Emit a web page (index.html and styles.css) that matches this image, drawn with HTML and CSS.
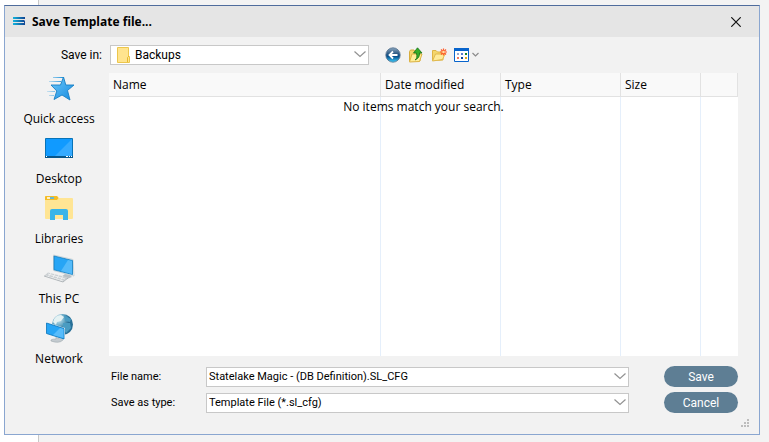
FILE: index.html
```html
<!DOCTYPE html>
<html lang="en">
<head>
<meta charset="utf-8">
<title>Save Template file...</title>
<link rel="stylesheet" href="styles.css">
</head>
<body>
<div class="desktop">
<form class="dialog" role="dialog" aria-labelledby="dialog-title">
  <header class="titlebar">
    <svg class="app-icon" width="13" height="9" viewBox="0 0 13 9" aria-hidden="true">
      <defs><linearGradient id="bar" gradientUnits="userSpaceOnUse" x1="0" x2="13" y1="0" y2="0"><stop offset="0" stop-color="#12b4dc"/><stop offset="1" stop-color="#123a8c"/></linearGradient></defs>
      <path d="M0 0H12V2H0ZM0 3H11L12 4V8H0V6H11V5H0Z" fill="url(#bar)"/>
    </svg>
    <h1 class="title" id="dialog-title">Save Template file...</h1>
    <button class="close" type="button" aria-label="Close">
      <svg width="10" height="10" viewBox="0 0 10 10"><path d="M.3.300 9.700 9.700M9.700.300.300 9.700" stroke="#111" stroke-width="1.200"/></svg>
    </button>
  </header>

  <div class="content">
    <label class="save-in-label" for="save-in">Save in:</label>
    <div class="toolbar">
      <div class="combo combo-folder">
        <select id="save-in"><option>Backups</option></select>
        <svg class="folder" width="13" height="16" viewBox="0 0 13 16" aria-hidden="true"><path d="M.5.500H11.500V9.500H12.500V15.500H.5Z" fill="#ffe48e" stroke="#ecc64c"/><path d="M10.500 15V10.500L12 9" fill="none" stroke="#e6b92e"/></svg>
        <svg class="chevron" width="12" height="7" viewBox="0 0 12 7" aria-hidden="true"><path d="M.5.500 6 5.500 11.500.500"/></svg>
      </div>
      <div class="tools">
        <button class="tool" type="button" aria-label="Back">
          <svg width="16" height="16" viewBox="0 0 16 16">
            <defs><linearGradient id="ball" x2="0" y2="1"><stop stop-color="#8ca7c0"/><stop offset=".4" stop-color="#315d86"/><stop offset=".6" stop-color="#07508c"/><stop offset="1" stop-color="#3fd0ff"/></linearGradient></defs>
            <circle cx="8" cy="8" r="7.200" fill="url(#ball)" stroke="#53708d" stroke-width=".8"/>
            <path d="M12.500 8H5M8 4.500 4.500 8 8 11.500" fill="none" stroke="#fff" stroke-width="1.800"/>
          </svg>
        </button>
        <button class="tool" type="button" aria-label="Up one level">
          <svg width="16" height="16" viewBox="0 0 16 16">
            <path d="M1.500 14V4.500L2.500 3H6L7 4.500H12V14Z" fill="#f3d56a" stroke="#d7ac3c"/>
            <path d="M1.500 15 4 7H14L11.500 14.500Z" fill="#ffed99" stroke="#dcb345"/>
            <path d="M7 13Q10 11 8.300 6H5.500L9.500.800 14 6H11.500Q12 11 7 13Z" fill="#36ad28" stroke="#167218" stroke-width=".8"/>
          </svg>
        </button>
        <button class="tool" type="button" aria-label="Create new folder">
          <svg width="16" height="16" viewBox="0 0 16 16">
            <path d="M1.500 13.500V3.500H5L6.500 5H12V13Z" fill="#f4d66d" stroke="#dfb446"/>
            <path d="M1.500 14 4.500 7H14L11.500 12.500Z" fill="#ffeb9b" stroke="#e0b94e"/>
            <path d="M12.500 1.500V8.500M9 5H16M10 2.500 15 7.500M15 2.500 10 7.500" stroke="#ff5a28" stroke-width="1.200"/><circle cx="12.500" cy="5" r="1.300" fill="#ffe0a0"/>
          </svg>
        </button>
        <button class="tool tool-view" type="button" aria-label="View menu">
          <svg width="25" height="16" viewBox="0 0 25 16">
            <path d="M.5 1.500H14.500V14.500H.5Z" fill="#fff" stroke="#0864cc"/><path d="M0 1H15V4H0Z" fill="#0864cc"/>
            <path d="M3 6h2v2H3z" fill="#98a8d0"/><path d="M7 6h2v2H7z" fill="#5b7ed1"/><path d="M11 6h2v2h-2z" fill="#148329"/>
            <path d="M3 10h2v2H3z" fill="#f07860"/><path d="M7 10h2v2H7z" fill="#08459e"/><path d="M11 10h2v2h-2z" fill="#e2ac18"/>
            <path d="M18.500 6 21.500 9 24.500 6" fill="none" stroke="#8b8b8b" stroke-width="1.200"/>
          </svg>
        </button>
      </div>
    </div>

    <nav class="places" aria-label="Places">
      <button class="place" type="button">
        <svg width="32" height="32" viewBox="0 0 32 32" aria-hidden="true">
          <defs>
            <linearGradient id="star" x2="1" y2="1"><stop stop-color="#6cc8fa"/><stop offset="1" stop-color="#168be0"/></linearGradient>
            <linearGradient id="trail" gradientUnits="userSpaceOnUse" x1="2" x2="19" y1="0" y2="0"><stop stop-color="#65b7e7" stop-opacity=".2"/><stop offset="1" stop-color="#2a98dc"/></linearGradient>
          </defs>
          <path d="M10 4.500H20M6 8.500H18M4 18.500H12M6 22.500H11" stroke="url(#trail)"/>
          <path d="M20.500 4 22.800 12H31L24.500 17.500 27 27 19 22 11 26.500 13.800 18 8 12H17.500Z" fill="url(#star)" stroke="#167fc4" stroke-width=".9"/>
        </svg>
        <span>Quick access</span>
      </button>
      <button class="place" type="button">
        <svg width="32" height="32" viewBox="0 0 32 32" aria-hidden="true">
          <path d="M2.500 5.500H29.500V24.500H2.500Z" fill="#109aff" stroke="#0873b7"/><path d="M12 23 29 6V23Z" fill="#35aaff"/>
          <path d="M2 23H30V25H2Z" fill="#07568b"/><path d="M3 23.500H4M23 23.500H25M26 23.500H27M28 23.500H29" stroke="#fff"/>
        </svg>
        <span>Desktop</span>
      </button>
      <button class="place" type="button">
        <svg width="32" height="32" viewBox="0 0 32 32" aria-hidden="true">
          <path d="M2 4Q2 3 3 3H14L16 5H29Q30 5 30 6V25Q30 26 29 26H3Q2 26 2 25Z" fill="#ffe594"/><path d="M2 7V4Q2 3 3 3H14L15.500 5 14 7Z" fill="#f4bd27"/>
          <path d="M4 5H11" stroke="#fff" stroke-width="1.500"/><path d="M7 5H11" stroke="#30a8df" stroke-width="1.500"/>
          <path d="M7 27V18Q7 16 9 16H23Q25 16 25 18V27H20V22H12V27Z" fill="#38b4e9"/>
        </svg>
        <span>Libraries</span>
      </button>
      <button class="place" type="button">
        <svg width="32" height="32" viewBox="0 0 32 32" aria-hidden="true">
          <path d="M22 21 27 22 29 24 24 26 18 24Z" fill="#b9c1c6"/><path d="M10.500 2 30 6.500 31 23 10.500 17.500Z" fill="#f7fafb" stroke="#b2bec5" stroke-width=".6"/>
          <path d="M11 3 29.500 7.500V21.500L11 16.800Z" fill="#27a5f5" stroke="#127cbc" stroke-width=".8"/><path d="M18 18 25 7 29 8V21Z" fill="#55bbfa"/>
          <path d="M5 19.500 25 24.500 20 29 1 23Z" fill="#cbd0d3"/><path d="M5 21 22 26M3 23 20 28M8 20 5 24M12 21 9 26M16 22 13 27M20 23 17 28" stroke="#f8f8f8" stroke-width=".7"/><path d="M1 23 20 29 25 25" fill="none" stroke="#9ea5a9" stroke-width=".7"/>
        </svg>
        <span>This PC</span>
      </button>
      <button class="place" type="button">
        <svg width="32" height="32" viewBox="0 0 32 32" aria-hidden="true">
          <defs><radialGradient id="globe" cx=".3" cy=".25"><stop stop-color="#d7edf4"/><stop offset=".6" stop-color="#6babc7"/><stop offset="1" stop-color="#286f96"/></radialGradient></defs>
          <circle cx="19.500" cy="11.500" r="10.500" fill="url(#globe)"/>
          <path d="M10 9Q12 2 18 2L21 4 18 8 14 9 13 12Z" fill="#e5f2f3"/><path d="M21 2 28 6 27 9 22 8ZM20 10 27 10 28 15 23 20 20 16Z" fill="#4a9cc2"/>
          <path d="M13 24 16 25.500 19 25 20 27Q16 31 8 28Q7 26 13 26Z" fill="#c4cbd0" stroke="#919ca3" stroke-width=".5"/>
          <path d="M3 9 22 15V27L3 21Z" fill="#eef6fa"/><path d="M3.500 10 21 15.500V26L3.500 20.500Z" fill="#27a5f5" stroke="#0872b8" stroke-width=".8"/><path d="M10 22 17 15 20.500 16V25Z" fill="#57bcfb"/>
        </svg>
        <span>Network</span>
      </button>
    </nav>

    <div class="list">
      <table class="files">
        <colgroup><col class="col-name"><col class="col-date"><col class="col-type"><col class="col-size"><col class="col-rest"></colgroup>
        <thead><tr><th scope="col">Name</th><th scope="col">Date modified</th><th scope="col">Type</th><th scope="col">Size</th><td></td></tr></thead>
        <tbody><tr><td></td><td></td><td></td><td></td><td></td></tr></tbody>
      </table>
      <p class="empty">No items match your search.</p>
    </div>

    <div class="fields">
      <label for="file-name">File name:</label>
      <div class="combo">
        <input id="file-name" type="text" value="Statelake Magic - (DB Definition).SL_CFG">
        <svg class="chevron" width="12" height="7" viewBox="0 0 12 7" aria-hidden="true"><path d="M.5.500 6 5.500 11.500.500"/></svg>
      </div>
      <button class="action" type="submit">Save</button>
      <label for="file-type">Save as type:</label>
      <div class="combo">
        <select id="file-type"><option>Template File (*.sl_cfg)</option></select>
        <svg class="chevron" width="12" height="7" viewBox="0 0 12 7" aria-hidden="true"><path d="M.5.500 6 5.500 11.500.500"/></svg>
      </div>
      <button class="action" type="button">Cancel</button>
    </div>
  </div>
  <svg class="grip" width="8" height="8" viewBox="0 0 8 8" aria-hidden="true"><path d="M6 0h2v2H6zM3 3h2v2H3zM6 3h2v2H6zM0 6h2v2H0zM3 6h2v2H3zM6 6h2v2H6z" fill="#bdbdbd"/></svg>
</form>
</div>
</body>
</html>
```
FILE: styles.css
```css
* { box-sizing: border-box; }

body {
  margin: 0;
  color: #000;
  font: 12px/18px "Open Sans", "Noto Sans", sans-serif;
}

button, input, select { font: inherit; color: inherit; }

button { padding: 0; border: 0; background: none; }

svg { display: block; }

.desktop {
  display: flex;
  min-height: 100vh;
  padding: 5px 9px 7px 4px;
  background: linear-gradient(to right, #fff 38px, #c8c8c8 38px, #c8c8c8 39px, #f3f3f3 39px);
}

.dialog {
  position: relative;
  display: flex;
  flex: 1;
  flex-direction: column;
  border: 1px solid #8aa6d0;
  border-top-color: #4f6c9c;
  background: #f2f2f2;
}

.titlebar {
  display: flex;
  align-items: center;
  height: 31px;
  padding: 0 18px 0 8px;
  background: #e5e5e5;
}

.title {
  flex: 1;
  margin: 0 0 0 6px;
  font: bold 12px/18px "Open Sans", sans-serif;
}

.content {
  display: grid;
  flex: 1;
  grid-template-columns: 104px 1fr;
  grid-template-rows: 36px 1fr auto;
  padding-right: 21px;
}

.save-in-label {
  align-self: center;
  padding-right: 7px;
  font-family: Roboto, sans-serif;
  text-align: right;
}

.toolbar {
  display: flex;
  align-items: center;
  padding-left: 1px;
  font-family: Roboto, sans-serif;
}

.combo { position: relative; height: 20px; }

.combo input,
.combo select {
  display: block;
  width: 100%;
  height: 100%;
  margin: 0;
  padding: 0 20px 0 2px;
  border: 1px solid #c8c8c8;
  border-radius: 0;
  outline: 0;
  background: #fff;
  appearance: none;
}

.combo-folder { flex: 0 1 259px; }

.combo-folder select { padding-left: 24px; }

.folder { position: absolute; top: 2px; left: 7px; }

.chevron { position: absolute; top: 6px; right: 3px; }

.chevron path { fill: none; stroke: #929292; stroke-width: 1.2; }

.tools { display: flex; gap: 7px; margin-left: 16px; }

.places {
  display: flex;
  grid-row: 2 / 4;
  grid-column: 1;
  flex-direction: column;
  padding-left: 4px;
}

.place {
  display: flex;
  flex-direction: column;
  align-items: center;
  gap: 5px;
  height: 60px;
}

.list {
  position: relative;
  display: grid;
  background: #fff;
}

.files {
  width: 100%;
  height: 100%;
  border-spacing: 0;
  table-layout: fixed;
}

.col-date, .col-type { width: 120px; }
.col-size { width: 80px; }
.col-rest { width: 37px; }

.files th, .files td { padding: 0; border-right: 1px solid #e5effb; }

.files thead th,
.files thead td {
  height: 24px;
  border-right-color: #e2e2e2;
  border-bottom: 1px solid #e2e2e2;
  background: #f9f9f9;
  font-weight: normal;
  text-align: left;
}

.files th { padding-left: 4px; }

.files tbody td:last-child { border-right: 0; }

.empty {
  position: absolute;
  top: 25px;
  right: 0;
  left: 0;
  margin: 0;
  text-align: center;
}

.fields {
  display: grid;
  grid-template-columns: 95px 1fr 74px;
  align-items: center;
  row-gap: 5px;
  padding: 10px 0 21px 2px;
  font: 11px/18px Roboto, sans-serif;
}

.fields .combo { margin-right: 35px; }

.action {
  height: 21px;
  border-radius: 11px;
  background: #5e7e94;
  color: #fff;
  font: 12px/18px Roboto, sans-serif;
}

.grip { position: absolute; right: 10px; bottom: 7px; }
```
